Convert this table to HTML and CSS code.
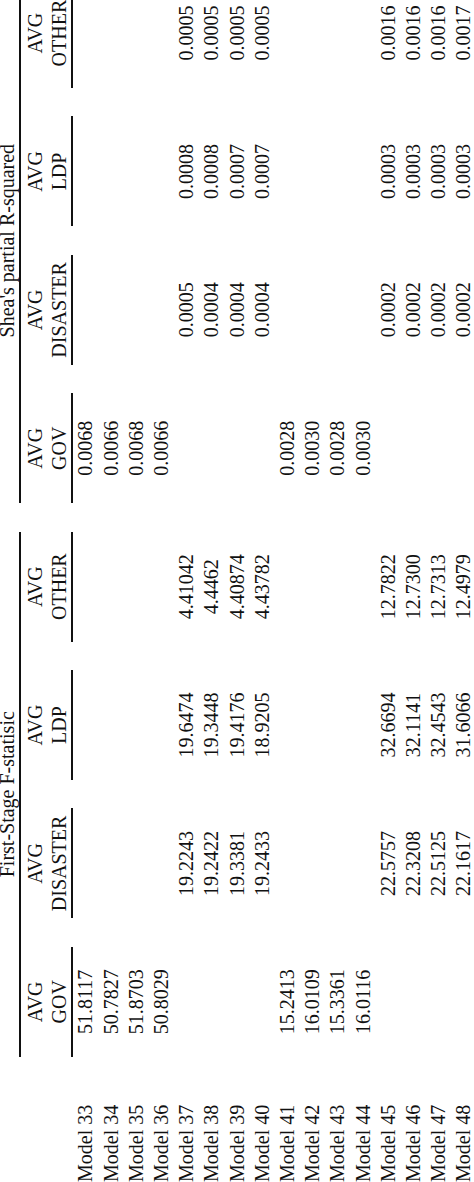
FILE: index.html
```html
<!DOCTYPE html>
<html lang="en">
<head>
<meta charset="utf-8">
<title>First-Stage F-statistic and Shea's partial R-squared</title>
<link rel="stylesheet" href="styles.css">
</head>
<body>
<div class="page">
  <div class="tbl">
    <div class="blank"></div>
    <div class="span">First-Stage F-statisic</div>
    <div class="span">Shea's partial R-squared</div>

    <div class="blank"></div>
    <div class="head">AVG<br>GOV</div>
    <div class="head">AVG<br>DISASTER</div>
    <div class="head">AVG<br>LDP</div>
    <div class="head">AVG<br>OTHER</div>
    <div class="head">AVG<br>GOV</div>
    <div class="head">AVG<br>DISASTER</div>
    <div class="head">AVG<br>LDP</div>
    <div class="head">AVG<br>OTHER</div>

    <div class="lab">Model 33</div><div class="num">51.8117</div><div class="num"></div><div class="num"></div><div class="num"></div><div class="num">0.0068</div><div class="num"></div><div class="num"></div><div class="num"></div>
    <div class="lab">Model 34</div><div class="num">50.7827</div><div class="num"></div><div class="num"></div><div class="num"></div><div class="num">0.0066</div><div class="num"></div><div class="num"></div><div class="num"></div>
    <div class="lab">Model 35</div><div class="num">51.8703</div><div class="num"></div><div class="num"></div><div class="num"></div><div class="num">0.0068</div><div class="num"></div><div class="num"></div><div class="num"></div>
    <div class="lab">Model 36</div><div class="num">50.8029</div><div class="num"></div><div class="num"></div><div class="num"></div><div class="num">0.0066</div><div class="num"></div><div class="num"></div><div class="num"></div>

    <div class="lab">Model 37</div><div class="num"></div><div class="num">19.2243</div><div class="num">19.6474</div><div class="num">4.41042</div><div class="num"></div><div class="num">0.0005</div><div class="num">0.0008</div><div class="num">0.0005</div>
    <div class="lab">Model 38</div><div class="num"></div><div class="num">19.2422</div><div class="num">19.3448</div><div class="num">4.4462</div><div class="num"></div><div class="num">0.0004</div><div class="num">0.0008</div><div class="num">0.0005</div>
    <div class="lab">Model 39</div><div class="num"></div><div class="num">19.3381</div><div class="num">19.4176</div><div class="num">4.40874</div><div class="num"></div><div class="num">0.0004</div><div class="num">0.0007</div><div class="num">0.0005</div>
    <div class="lab">Model 40</div><div class="num"></div><div class="num">19.2433</div><div class="num">18.9205</div><div class="num">4.43782</div><div class="num"></div><div class="num">0.0004</div><div class="num">0.0007</div><div class="num">0.0005</div>

    <div class="lab">Model 41</div><div class="num">15.2413</div><div class="num"></div><div class="num"></div><div class="num"></div><div class="num">0.0028</div><div class="num"></div><div class="num"></div><div class="num"></div>
    <div class="lab">Model 42</div><div class="num">16.0109</div><div class="num"></div><div class="num"></div><div class="num"></div><div class="num">0.0030</div><div class="num"></div><div class="num"></div><div class="num"></div>
    <div class="lab">Model 43</div><div class="num">15.3361</div><div class="num"></div><div class="num"></div><div class="num"></div><div class="num">0.0028</div><div class="num"></div><div class="num"></div><div class="num"></div>
    <div class="lab">Model 44</div><div class="num">16.0116</div><div class="num"></div><div class="num"></div><div class="num"></div><div class="num">0.0030</div><div class="num"></div><div class="num"></div><div class="num"></div>

    <div class="lab">Model 45</div><div class="num"></div><div class="num">22.5757</div><div class="num">32.6694</div><div class="num">12.7822</div><div class="num"></div><div class="num">0.0002</div><div class="num">0.0003</div><div class="num">0.0016</div>
    <div class="lab">Model 46</div><div class="num"></div><div class="num">22.3208</div><div class="num">32.1141</div><div class="num">12.7300</div><div class="num"></div><div class="num">0.0002</div><div class="num">0.0003</div><div class="num">0.0016</div>
    <div class="lab">Model 47</div><div class="num"></div><div class="num">22.5125</div><div class="num">32.4543</div><div class="num">12.7313</div><div class="num"></div><div class="num">0.0002</div><div class="num">0.0003</div><div class="num">0.0016</div>
    <div class="lab">Model 48</div><div class="num"></div><div class="num">22.1617</div><div class="num">31.6066</div><div class="num">12.4979</div><div class="num"></div><div class="num">0.0002</div><div class="num">0.0003</div><div class="num">0.0017</div>
  </div>
</div>
</body>
</html>
```

FILE: styles.css
```css
html, body {
  margin: 0;
  padding: 0;
  background: #fff;
}

body {
  width: 474px;
  height: 1182px;
  overflow: hidden;
}

.page {
  width: 1182px;
  height: 474px;
  overflow: hidden;
  transform-origin: 0 0;
  transform: translateY(1182px) rotate(-90deg);
  font-family: "Liberation Serif", "Times New Roman", serif;
  font-size: 20px;
  color: #111;
}

.tbl {
  display: grid;
  grid-template-columns: 111px repeat(8, 138.4px);
  margin-top: -3.6px;
}

.span {
  grid-column: span 4;
  margin: 0 14.2px;
  text-align: center;
  line-height: 23px;
  white-space: nowrap;
  border-bottom: 2px solid #111;
}

.head {
  margin: 0 14.2px;
  padding-top: 2px;
  text-align: center;
  line-height: 24px;
  white-space: nowrap;
  border-bottom: 2px solid #111;
}

.lab {
  line-height: 25.2px;
  white-space: nowrap;
}

.num {
  line-height: 25.2px;
  text-align: center;
  white-space: nowrap;
}
```
